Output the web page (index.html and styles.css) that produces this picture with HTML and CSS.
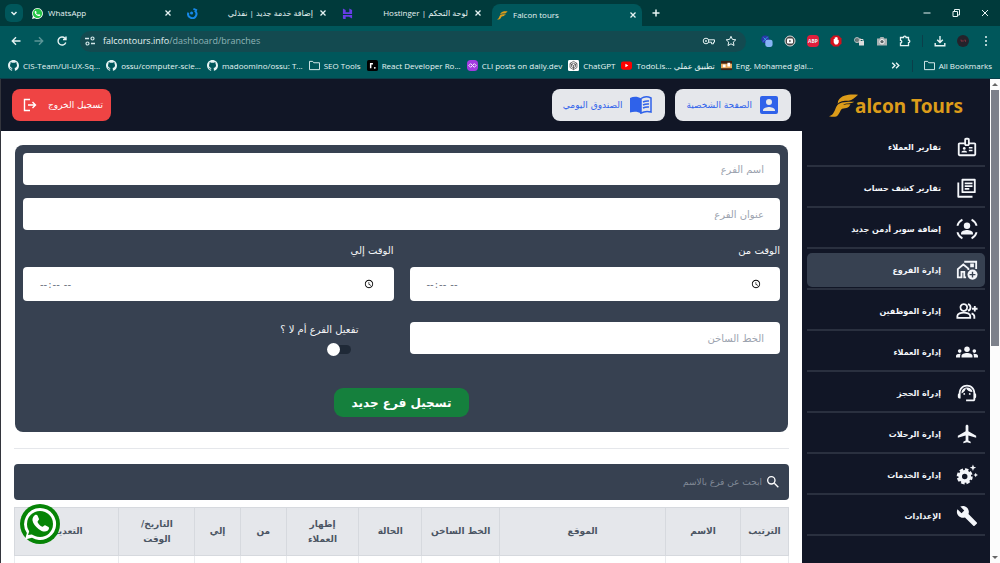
FILE: index.html
```html
<!DOCTYPE html>
<html lang="en">
<head>
<meta charset="utf-8">
<meta name="viewport" content="width=device-width, initial-scale=1">
<title>Falcon tours</title>
<link rel="stylesheet" href="styles.css">
</head>
<body>
<svg class="sprite" aria-hidden="true">
  <symbol id="close" viewBox="0 0 10 10"><path d="M2.500 2.500l5 5M7.500 2.500l-5 5" fill="none" stroke="currentColor" stroke-width="1.300"/></symbol>
  <symbol id="folder" viewBox="0 0 12 12"><path d="M.5 1.500h3.500l1.200 1.500h6.300v7.500H.5z" fill="none" stroke="currentColor" stroke-linejoin="round"/></symbol>
  <symbol id="github" viewBox="0 0 16 16"><path fill="currentColor" d="M8 0C3.58 0 0 3.58 0 8c0 3.54 2.29 6.53 5.47 7.59.4.07.55-.17.55-.38 0-.19-.01-.82-.01-1.49-2.01.37-2.53-.49-2.69-.94-.09-.23-.48-.94-.82-1.13-.28-.15-.68-.52-.01-.53.63-.01 1.08.58 1.23.82.72 1.21 1.87.87 2.33.66.07-.52.28-.87.51-1.07-1.78-.2-3.64-.89-3.64-3.95 0-.87.31-1.59.82-2.15-.08-.2-.36-1.02.08-2.12 0 0 .67-.21 2.2.82.64-.18 1.32-.27 2-.27s1.36.09 2 .27c1.53-1.04 2.2-.82 2.2-.82.44 1.1.16 1.92.08 2.12.51.56.82 1.27.82 2.15 0 3.07-1.87 3.75-3.65 3.95.29.25.54.73.54 1.48 0 1.07-.01 1.93-.01 2.2 0 .21.15.46.55.38A8.01 8.01 0 0 0 16 8c0-4.42-3.58-8-8-8"/></symbol>
  <symbol id="handset" viewBox="0 0 16 16"><path fill="currentColor" d="M11.609 9.587c-.197-.099-1.17-.578-1.353-.646-.182-.065-.315-.099-.445.099-.133.197-.513.646-.627.775-.114.133-.232.148-.43.05-.197-.1-.836-.308-1.592-.985-.59-.525-.985-1.175-1.103-1.372-.114-.198-.011-.304.088-.403.087-.088.197-.232.296-.346.1-.114.133-.198.198-.33.065-.134.034-.248-.015-.347-.05-.099-.445-1.076-.612-1.47-.16-.389-.323-.335-.445-.34-.114-.007-.247-.007-.38-.007a.73.73 0 0 0-.529.247c-.182.198-.691.677-.691 1.654s.71 1.916.81 2.049c.098.133 1.394 2.132 3.383 2.992.47.205.84.326 1.129.418.475.152.904.129 1.246.08.38-.058 1.171-.48 1.338-.943.164-.464.164-.86.114-.992-.049-.133-.182-.198-.38-.297"/></symbol>
  <symbol id="falcon" viewBox="0 0 32 26"><path fill="currentColor" d="M31 1C23 0 13 1 10 7c-1 2 0 2-1 4 3-3 6-3.500 12-3.500 4-1 6-3 10-6.500zM27 8.500C19 8.500 12 8.500 9 12c-2 2.500-2 5-4 8-1 2-2 3-5 4 5 1 8 1 10-2 2-2 2-5 4-6 2-1 4-.5 6-1.500 2-1 2-2.500 3-3.500-3 0-6 0-8 1 3-2.500 8-1 12-3.500z"/></symbol>
</svg>

<div class="browser">
  <div class="tabs">
    <button class="tab-menu" aria-label="Search tabs"><svg viewBox="0 0 10 10"><path d="M2.500 4L5 6.500 7.500 4" fill="none" stroke="currentColor" stroke-width="1.500"/></svg></button>
    <div class="tab">
      <svg class="fav" viewBox="0 0 16 16"><path d="M8 0a8 8 0 1 1-4 15L0 16l1.200-4A8 8 0 0 1 8 0z" fill="#fff"/><circle cx="8" cy="8" r="6.800" fill="#25c648"/><use href="#handset" color="#fff"/></svg>
      <span class="tab-title">WhatsApp</span>
      <button class="x" aria-label="Close tab"><svg><use href="#close"/></svg></button>
    </div>
    <div class="tab">
      <svg class="fav" viewBox="0 0 12 12"><path d="M1.500 5a4.500 4.500 0 1 0 7-2" fill="none" stroke="#1688e8" stroke-width="2.200"/><circle cx="5" cy="5.500" r="1.700" fill="#1688e8"/><path d="M7 1l4 1.500" stroke="#1688e8" stroke-width="2"/></svg>
      <span class="tab-title rtl" dir="rtl">إضافة خدمة جديد | نفذلي</span>
      <button class="x" aria-label="Close tab"><svg><use href="#close"/></svg></button>
    </div>
    <div class="tab">
      <svg class="fav" viewBox="0 0 12 12"><path d="M1 .5l3 1.800v2.200h4V.5l3 1.800v4.200H1zM1 11.500V7.500h10v4L8 9.800V9.500H4v3.800z" fill="#673de6"/></svg>
      <span class="tab-title rtl" dir="rtl">لوحة التحكم | Hostinger</span>
      <button class="x" aria-label="Close tab"><svg><use href="#close"/></svg></button>
    </div>
    <div class="tab active">
      <svg class="fav gold" viewBox="0 0 32 26"><use href="#falcon"/></svg>
      <span class="tab-title">Falcon tours</span>
      <button class="x" aria-label="Close tab"><svg><use href="#close"/></svg></button>
    </div>
    <button class="new-tab" aria-label="New tab"><svg viewBox="0 0 10 10"><path d="M5 1.500v7M1.500 5h7" stroke="currentColor" stroke-width="1.500"/></svg></button>
    <div class="window-controls">
      <button aria-label="Minimize"><svg viewBox="0 0 10 10"><path d="M1.500 5h7" stroke="currentColor"/></svg></button>
      <button aria-label="Restore"><svg viewBox="0 0 10 10"><path d="M2 3.500h4.500V8.500H2zM3.500 3.500V1.500h5V7h-2" fill="none" stroke="currentColor"/></svg></button>
      <button aria-label="Close window"><svg viewBox="0 0 10 10"><path d="M2 2l6 6M8 2L2 8" stroke="currentColor"/></svg></button>
    </div>
  </div>

  <div class="toolbar">
    <div class="nav-buttons">
      <button aria-label="Back"><svg viewBox="0 0 12 12"><path d="M10.500 6H2.500M6 2.300L2.300 6 6 9.700" fill="none" stroke="currentColor" stroke-width="1.400"/></svg></button>
      <button class="dim" aria-label="Forward"><svg viewBox="0 0 12 12"><path d="M1.500 6h8M6 2.300L9.700 6 6 9.700" fill="none" stroke="currentColor" stroke-width="1.400"/></svg></button>
      <button aria-label="Reload"><svg viewBox="0 0 12 12"><path d="M9.800 7.500A4 4 0 1 1 9 3.300L10 4.300M10 1.500v3H7" fill="none" stroke="currentColor" stroke-width="1.400"/></svg></button>
    </div>
    <div class="address">
      <svg class="site" viewBox="0 0 12 12"><path d="M1 3.500h4M7 8.500h4" stroke="#d5e8ea" stroke-width="1.300"/><circle cx="8.500" cy="3.500" r="1.500" fill="none" stroke="#d5e8ea" stroke-width="1.200"/><circle cx="3.500" cy="8.500" r="1.500" fill="none" stroke="#d5e8ea" stroke-width="1.200"/></svg>
      <span class="url">falcontours.info<span class="path">/dashboard/branches</span></span>
      <svg class="key" viewBox="0 0 14 12"><circle cx="4" cy="6" r="2.800" fill="none" stroke="currentColor"/><circle cx="4" cy="6" r=".9" fill="currentColor"/><path d="M6.500 4.800h6v2.400h-1v1.600H9.500V7.200h-3" fill="none" stroke="currentColor"/></svg>
      <svg class="star" viewBox="0 0 12 12"><path d="M6 1.300l1.400 3.100 3.400.4-2.500 2.300.7 3.400-3-1.700-3 1.700.7-3.400L1.200 4.800l3.400-.4z" fill="none" stroke="currentColor"/></svg>
    </div>
    <div class="extensions">
      <button aria-label="Translate extension"><svg viewBox="0 0 14 14"><circle cx="5" cy="5" r="4.500" fill="#2a35a8"/><path d="M2 8l6-6M3 3l4 4" stroke="#35b5e8"/><rect x="5" y="5.500" width="8.500" height="8.500" rx="2.500" fill="#86b4f5"/></svg></button>
      <button aria-label="Video extension"><svg viewBox="0 0 12 12"><circle cx="6" cy="6" r="5" fill="#464646" stroke="#ddd"/><rect x="3" y="3.500" width="6" height="5" rx="1.200" fill="#fff"/><path d="M5.300 4.800v2.400l2-1.200z" fill="#333"/></svg></button>
      <button class="abp" aria-label="Ad block extension">ABP</button>
      <button aria-label="Blocker extension"><svg viewBox="0 0 12 12"><path d="M3.500.5h5l3 3v5l-3 3h-5l-3-3v-5z" fill="#d4101c"/><path d="M3.700 5.500V4h1V2.500h1V2h1v.5h1V5l1-.3v2.800L7.300 9.500H5L3.700 7.500z" fill="#fff"/></svg></button>
      <button aria-label="Lock extension"><svg viewBox="0 0 12 12"><path d="M2 3h6v5H3z" fill="#6b7677"/><circle cx="4" cy="5" r="2.500" fill="none" stroke="#b3c0c1"/><rect x="6" y="6" width="5" height="4.500" fill="#ddd"/><path d="M7 6V4.500h3V6" fill="none" stroke="#ddd"/></svg></button>
      <button aria-label="Screenshot extension"><svg viewBox="0 0 12 12"><path d="M1 3.500h2.500l1-1.500h3l1 1.500H11v7H1z" fill="#aab2b3"/><circle cx="6" cy="6.700" r="2.200" fill="#5c6668" stroke="#fff"/></svg></button>
      <button aria-label="Extensions"><svg viewBox="0 0 12 12"><path d="M1.500 2.500h3a1.300 1.300 0 0 1 2.600 0h2.400V5a1.300 1.300 0 0 1 0 2.600v3h-8V8a1.300 1.300 0 0 0 0-2.600z" fill="none" stroke="currentColor" stroke-width="1.300"/></svg></button>
      <span class="divider"></span>
      <button aria-label="Downloads"><svg viewBox="0 0 12 12"><path d="M6 1v6.500M3.200 4.800L6 7.600l2.800-2.800M1.200 8v2.800h9.600V8" fill="none" stroke="currentColor" stroke-width="1.400"/></svg></button>
      <button aria-label="Profile"><svg class="avatar" viewBox="0 0 14 14"><circle cx="7" cy="7" r="7" fill="#24222b"/><path d="M4 6h1.500v2M7 6v2M8.500 6h1.500v2" stroke="#8b3640" fill="none"/></svg></button>
      <button aria-label="Menu"><svg viewBox="0 0 12 12" fill="currentColor"><circle cx="6" cy="2" r="1"/><circle cx="6" cy="6" r="1"/><circle cx="6" cy="10" r="1"/></svg></button>
    </div>
  </div>

  <nav class="bookmarks" aria-label="Bookmarks">
    <a href="#"><svg><use href="#github"/></svg>CIS-Team/UI-UX-Sq...</a>
    <a href="#"><svg><use href="#github"/></svg>ossu/computer-scie...</a>
    <a href="#"><svg><use href="#github"/></svg>madoomino/ossu: T...</a>
    <a href="#"><svg><use href="#folder"/></svg>SEO Tools</a>
    <a href="#"><svg viewBox="0 0 12 12"><rect width="12" height="12" rx="2" fill="#000"/><path d="M4 9V4h2.500" fill="none" stroke="#fff" stroke-width="1.600"/><circle cx="8.500" cy="8.500" r="1" fill="#fff"/></svg>React Developer Ro...</a>
    <a href="#"><svg viewBox="0 0 12 12"><rect width="12" height="12" rx="4" fill="#a33be0"/><path d="M2 6l2-2 2 2-2 2zM6 6l2-2 2 2-2 2z" fill="none" stroke="#fff"/></svg>CLI posts on daily.dev</a>
    <a href="#"><svg viewBox="0 0 12 12"><rect width="12" height="12" rx="1.500" fill="#fff"/><path d="M6 1.500L9.800 3.700v4.500L6 10.500 2.200 8.200V3.700zM6 3.500l2.200 1.200v2.600L6 8.500 3.800 7.300V4.700zM2.200 3.700L6 6l3.800-2.300M6 6v4.500" fill="none" stroke="#444" stroke-width=".8"/></svg>ChatGPT</a>
    <a href="#"><svg viewBox="0 0 12 12"><rect y="1.500" width="12" height="9" rx="2.300" fill="#f00"/><path d="M4.800 4v4L8 6z" fill="#fff"/></svg><span>TodoLis... تطبيق عملي</span></a>
    <a href="#"><svg viewBox="0 0 12 12"><rect y="1" width="12" height="10" fill="#3b2013"/><rect y="4" width="12" height="5" fill="#e8a659"/><path d="M2 5h3v3H2zM7 3h3v4H7z" fill="#fff"/></svg>Eng. Mohamed glal...</a>
    <button class="more" aria-label="More bookmarks"><svg viewBox="0 0 10 10"><path d="M2 2.500L4.500 5 2 7.500M5.500 2.500L8 5 5.500 7.500" fill="none" stroke="currentColor" stroke-width="1.300"/></svg></button>
    <span class="divider"></span>
    <a href="#"><svg><use href="#folder"/></svg>All Bookmarks</a>
  </nav>
</div>

<div class="page" dir="rtl" lang="ar">
  <div class="scrollbar" aria-hidden="true"><span class="arrow up"></span><span class="thumb"></span><span class="arrow down"></span></div>

  <aside class="sidebar">
    <a class="logo" href="#" dir="ltr"><svg viewBox="0 0 32 26"><use href="#falcon"/></svg><span>alcon Tours</span></a>
    <ul class="menu">
      <li><a href="#"><svg viewBox="0 0 24 24"><path d="M20 7h-5V4c0-1.100-.9-2-2-2h-2c-1.100 0-2 .9-2 2v3H4c-1.100 0-2 .9-2 2v11c0 1.100.9 2 2 2h16c1.100 0 2-.9 2-2V9c0-1.100-.9-2-2-2zm-9-3h2v5h-2V4zm9 16H4V9h5c0 1.100.9 2 2 2h2c1.100 0 2-.9 2-2h5v11z"/><circle cx="9" cy="13.500" r="1.500"/><path d="M6 18v-.5c0-1 1.500-1.800 3-1.800s3 .8 3 1.800v.5zM14 12h4v1.500h-4zM14 15h4v1.500h-4z"/></svg>تقارير العملاء</a></li>
      <li><a href="#"><svg viewBox="0 0 24 24"><path d="M8 3h12.500v13.500H7V3z M2.500 6v15.500H18" fill="none" stroke="currentColor" stroke-width="2" stroke-linejoin="round"/><path d="M9.500 6h8.500v2H9.500zM9.500 9h8.500v1.800H9.500zM9.500 12h5v1.800h-5z"/></svg>تقارير كشف حساب</a></li>
      <li><a href="#"><svg viewBox="0 0 24 24"><circle cx="12" cy="8.500" r="3.500"/><path d="M5.500 18v-1.500c0-2.200 4-3.500 6.500-3.500s6.500 1.300 6.500 3.500V18z"/><path d="M1.500 8.500A11 11 0 0 1 7 1.800M17 1.800a11 11 0 0 1 5.500 6.700M22.500 15.500a11 11 0 0 1-5.500 6.700M7 22.200a11 11 0 0 1-5.500-6.700" fill="none" stroke="currentColor" stroke-width="2"/></svg>إضافة سوبر أدمن جديد</a></li>
      <li><a class="current" href="#" aria-current="page"><svg viewBox="0 0 24 24"><path d="M11 20H9v-6H6v6H2v-9l6-5 5.500 4.500V12M9 3h13v8M16.500 6h2v2h-2z" fill="none" stroke="currentColor" stroke-width="2"/><circle cx="18" cy="17" r="5.500"/><path d="M18 13.800v6.400M14.800 17h6.400" stroke="#374151" stroke-width="1.500"/></svg>إدارة الفروع</a></li>
      <li><a href="#"><svg viewBox="0 0 24 24"><path d="M8.500 4.500a3.700 3.700 0 1 0 .01 0zM1.500 19.500v-2c0-2.500 4-3.800 7-3.800s7 1.300 7 3.800v2zM13 4.500a3.700 3.700 0 0 1 0 7.200M17 14.500c2 .8 3 2 3 3.500v2.500M17.500 9.500h6M20.500 6.500v6" fill="none" stroke="currentColor" stroke-width="2"/></svg>إدارة الموظفين</a></li>
      <li><a href="#"><svg viewBox="0 0 24 24"><circle cx="12" cy="9" r="3"/><circle cx="4" cy="11" r="2"/><circle cx="20" cy="11" r="2"/><path d="M6 18v-1.600c0-2 3-3.200 6-3.200s6 1.200 6 3.200V18zM0 18v-1.600c0-1.600 2.300-2.600 5.200-2.400C4.500 15 4.500 16 4.500 18zM24 18v-1.600c0-1.600-2.300-2.600-5.200-2.400.7 1 .7 2 .7 4z"/></svg>إدارة العملاء</a></li>
      <li><a href="#"><svg viewBox="0 0 24 24"><path d="M21 12.220C21 6.730 16.740 3 12 3c-4.690 0-9 3.650-9 9.280-.6.340-1 .98-1 1.720v2c0 1.100.9 2 2 2h1v-6.100c0-3.870 3.130-7 7-7s7 3.130 7 7V19h-8v2h8c1.100 0 2-.9 2-2v-1.220c.59-.31 1-.92 1-1.640v-2.300c0-.7-.41-1.310-1-1.620z"/><circle cx="9" cy="13" r="1"/><circle cx="15" cy="13" r="1"/><path d="M18 11.030A6.040 6.040 0 0 0 12.050 6c-3.030 0-6.290 2.510-6.030 6.450a8.075 8.075 0 0 0 4.860-5.890c1.310 2.630 4 4.440 7.120 4.470z"/></svg>إدراة الحجز</a></li>
      <li><a href="#"><svg viewBox="0 0 24 24"><path d="M22 16v-2l-8.500-5V3.500c0-.83-.67-1.500-1.500-1.500s-1.500.67-1.500 1.500V9L2 14v2l8.500-2.500V19L8 20.500V22l4-1 4 1v-1.500L13.500 19v-5.500L22 16z"/></svg>إدارة الرحلات</a></li>
      <li><a href="#"><svg viewBox="0 0 24 24"><circle cx="9.500" cy="13.500" r="5" fill="none" stroke="currentColor" stroke-width="4"/><circle cx="9.500" cy="13.500" r="7.500" fill="none" stroke="currentColor" stroke-width="2.500" stroke-dasharray="3.900 1.990"/><path d="M18.500.5l1 2.500L22 4l-2.500 1-1 2.500-1-2.500L15 4l2.500-1zM21.500 9.500l.8 1.700 1.700.8-1.700.8-.8 1.700-.8-1.700L19 12l1.700-.8z"/></svg>إدارة الخدمات</a></li>
      <li><a href="#"><svg viewBox="0 0 24 24"><path d="M22.700 19l-9.100-9.100c.9-2.300.4-5-1.500-6.900-2-2-5-2.400-7.400-1.300L9 6 6 9 1.600 4.700C.4 7.100.9 10.100 2.900 12.100c1.900 1.900 4.600 2.400 6.900 1.500l9.100 9.100c.4.4 1 .4 1.400 0l2.300-2.300c.5-.4.5-1.100.1-1.400z"/></svg>الإعدادات</a></li>
    </ul>
  </aside>

  <div class="main">
    <header class="topbar">
      <a class="chip" href="#"><svg viewBox="0 0 18 18"><path d="M0 2v14a2 2 0 0 0 2 2h14a2 2 0 0 0 2-2V2a2 2 0 0 0-2-2H2a2 2 0 0 0-2 2zm12 4a3 3 0 1 1-6 0 3 3 0 0 1 6 0zM3 14c0-2 4-3.100 6-3.100s6 1.100 6 3.100v1H3z"/></svg>الصفحة الشخصية</a>
      <a class="chip" href="#"><svg class="book" viewBox="0 0 22 18"><path d="M0 2c4-2 8-1.500 11 .5v15c-3-2-7-2-11-1z"/><path d="M11 2.500C14 .5 18 .5 21 2v14c-4-1-7-.7-10 1.200zM13 6c2-1 4-1.300 6-1M13 9c2-1 4-1.300 6-1M13 12c2-1 4-1.300 6-1" fill="none" stroke="currentColor" stroke-width="1.500"/></svg>الصندوق اليومي</a>
      <button class="logout">تسجيل الخروج<svg viewBox="0 0 14 14"><path d="M7 1.500H1.500v11H7M5 7h7.500M9.500 4l3 3-3 3" fill="none" stroke="currentColor" stroke-width="1.400"/></svg></button>
    </header>

    <main class="content">
      <form class="card">
        <input class="field wide" type="text" placeholder="اسم الفرع" aria-label="اسم الفرع">
        <input class="field wide" type="text" placeholder="عنوان الفرع" aria-label="عنوان الفرع">
        <div class="group"><label for="from">الوقت من</label><input class="field time" id="from" type="time" dir="ltr"></div>
        <div class="group"><label for="to">الوقت إلي</label><input class="field time" id="to" type="time" dir="ltr"></div>
        <input class="field hotline" type="tel" dir="rtl" placeholder="الخط الساخن" aria-label="الخط الساخن">
        <div class="toggle"><label for="active">تفعيل الفرع أم لا ؟</label><input id="active" type="checkbox" role="switch"></div>
        <button class="submit" type="button">تسجيل فرع جديد</button>
      </form>
      <hr>
      <div class="search">
        <svg viewBox="0 0 24 24"><circle cx="9.500" cy="9.500" r="5.500"/><path d="M14 14l6 6"/></svg>
        <input type="search" placeholder="ابحث عن فرع بالاسم" aria-label="ابحث عن فرع بالاسم">
      </div>
      <table>
        <colgroup><col class="c-order"><col class="c-name"><col><col class="c-phone"><col class="c-state"><col class="c-show"><col class="c-time"><col class="c-time"><col class="c-date"><col class="c-edit"></colgroup>
        <thead><tr><th>الترتيب</th><th>الاسم</th><th>الموقع</th><th>الخط الساخن</th><th>الحالة</th><th>إظهار العملاء</th><th>من</th><th>إلي</th><th>التاريخ/ الوقت</th><th>التعديل</th></tr></thead>
        <tbody><tr><td></td><td></td><td></td><td></td><td></td><td></td><td></td><td></td><td></td><td></td></tr></tbody>
      </table>
    </main>
    <a class="whatsapp" href="#" aria-label="WhatsApp"><svg viewBox="0 0 40 40"><circle cx="20" cy="20" r="20" fill="#068406"/><path d="M20 4a16 16 0 1 1-8 29.800L5 35.500l1.900-6.600A16 16 0 0 1 20 4z" fill="#fff"/><circle cx="20" cy="20" r="13" fill="#068406"/><path d="M8 31l2-6 5 5z" fill="#068406"/><path d="M14 12c1-1.500 3-1.500 3.500-.5l1.500 3.500c.3 1-1.800 2.300-1.500 3 1 2.200 2.500 3.700 4.800 4.800.8.300 1.900-1.900 2.900-1.500l3.300 1.700c1 .5.500 2.700-1 3.800-2.500 1.700-6 .5-9-1.800-3-2.500-5.500-5.500-6-8.500-.2-2 .5-3.500 1.500-4.500z" fill="#fff"/></svg></a>
  </div>
</div>
</body>
</html>
```
FILE: styles.css
```css
* { box-sizing: border-box; }

body {
  margin: 0;
  height: 100vh;
  display: flex;
  flex-direction: column;
  overflow: hidden;
  background: #fff;
  font-family: "DejaVu Sans", sans-serif;
}

button { border: 0; padding: 0; background: none; color: inherit; font: inherit; }
a { color: inherit; text-decoration: none; }
svg { display: block; flex: none; }
.sprite { position: absolute; width: 0; height: 0; }

/* Browser window */
.browser {
  flex: none;
  background: #00575b;
  color: #e6f4f4;
  font: 8px/12px "Open Sans", "DejaVu Sans", sans-serif;
  border-bottom: 1px solid #0b3f4a;
}
.tabs {
  display: flex;
  align-items: center;
  height: 26px;
  padding-left: 5px;
  background: #003a3b;
}
.tab-menu {
  display: grid;
  place-items: center;
  width: 18px;
  height: 18px;
  margin-right: 4px;
  border-radius: 6px;
  background: #00575b;
}
.tab-menu svg, .x svg { width: 10px; height: 10px; }
.tab {
  display: flex;
  align-items: center;
  gap: 5px;
  width: 155px;
  height: 22px;
  padding: 0 9px 0 5px;
}
.fav { width: 11px; height: 11px; }
.gold { color: #dc9c1a; }
.tab-title { flex: 1; white-space: nowrap; }
.tab-title.rtl { text-align: right; }
.tab.active {
  align-self: flex-end;
  width: 150px;
  padding-right: 4px;
  border-radius: 8px 8px 0 0;
  background: #00575b;
}
.new-tab { margin-left: 9px; }
.new-tab svg { width: 10px; height: 10px; }
.window-controls { display: flex; gap: 19px; margin-left: auto; padding-right: 10px; }
.window-controls svg { width: 10px; height: 10px; }

.toolbar { display: flex; align-items: center; height: 30px; padding: 0 8px 0 10px; }
.nav-buttons { display: flex; gap: 11px; margin-right: 12px; }
.nav-buttons svg, .extensions svg { width: 12px; height: 12px; }
.dim { opacity: .4; }
.address {
  flex: 1;
  display: flex;
  align-items: center;
  gap: 9px;
  height: 21px;
  padding: 0 9px 0 4px;
  border-radius: 11px;
  background: #134a50;
}
.site { width: 12px; height: 12px; }
.url { flex: 1; margin-left: -2px; font-size: 9px; }
.path { color: #8fb4b7; }
.key { width: 14px; height: 12px; }
.star { width: 12px; height: 12px; }
.extensions { display: flex; align-items: center; gap: 11px; padding-left: 15px; }
.extensions .abp {
  width: 12px;
  height: 12px;
  border-radius: 4px;
  background: #e01e3c;
  font: bold 5px/12px "Open Sans", sans-serif;
  text-align: center;
}
.divider { width: 1px; height: 12px; background: #0b3f4a; }

.bookmarks {
  display: flex;
  align-items: center;
  gap: 6px;
  height: 22px;
  padding: 0 8px 3px;
  white-space: nowrap;
}
.bookmarks a { display: flex; align-items: center; gap: 4px; }
.bookmarks svg { width: 11px; height: 11px; }
.bookmarks .divider { margin: 0 5px; }
.more { margin-left: auto; }

/* Dashboard */
.page { flex: 1; display: flex; min-height: 0; border-left: 1px solid #33353d; }
.scrollbar {
  display: flex;
  flex-direction: column;
  justify-content: space-between;
  align-items: center;
  width: 10px;
  background: #fcfcfc;
}
.thumb { width: 8px; height: 256px; margin-bottom: auto; background: #7d818b; }
.arrow { width: 10px; height: 11px; display: grid; place-items: center; }
.arrow::before { content: ""; border: 3px solid transparent; }
.up::before { border-top-width: 0; border-bottom-color: #666; }
.down::before { border-bottom-width: 0; border-top-color: #666; }

.sidebar { width: 188px; padding: 0 5px; background: #111626; color: #f4f6fa; }
.logo {
  display: flex;
  align-items: center;
  justify-content: center;
  height: 51px;
  padding-top: 3px;
  color: #dc9c1a;
  font: bold 19px/24px "Noto Sans", sans-serif;
}
.logo svg { width: 30px; height: 26px; margin-right: -4px; }
.menu { margin: 0; padding: 0; list-style: none; }
.menu li { padding-bottom: 1px; margin-bottom: 4px; border-bottom: 2px solid #2a303f; }
.menu a {
  display: flex;
  align-items: center;
  gap: 15px;
  height: 34px;
  padding: 0 7px;
  border-radius: 5px;
  font-size: 8px;
  font-weight: bold;
}
.menu svg { width: 22px; height: 22px; fill: currentColor; }
.menu .current { background: #374151; }

.main { flex: 1; min-width: 0; position: relative; }
.topbar { display: flex; gap: 10px; padding: 10px 11px; background: #111626; }
.chip, .logout {
  display: flex;
  align-items: center;
  gap: 8px;
  height: 32px;
  padding: 0 11px;
  border-radius: 8px;
  font-size: 9px;
  white-space: nowrap;
}
.chip { padding-right: 13px; background: #e5e7eb; color: #2f62ea; }
.chip svg { width: 18px; height: 18px; fill: currentColor; }
.chip .book { width: 22px; }
.logout { gap: 11px; margin-right: auto; padding-right: 8px; background: #ef4444; color: #fff; }
.logout svg { width: 14px; height: 14px; }

.content { padding: 14px 13px; }
.card {
  display: grid;
  grid-template-columns: 1fr 1fr;
  gap: 13px 16px;
  margin: 0 1px;
  padding: 8px 8px 15px;
  border-radius: 8px;
  background: #374151;
  color: #f3f4f6;
  font-size: 10px;
}
.field {
  width: 100%;
  height: 32px;
  padding: 0 16px;
  border: 0;
  border-radius: 4px;
  background: #fff;
  color: #6b7280;
  font: 10px "DejaVu Sans", sans-serif;
}
.field::placeholder { color: #9ca3af; opacity: 1; }
.wide { grid-column: 1 / -1; }
.group { display: grid; gap: 8px; }
.group label { line-height: 16px; }
.time { height: 34px; }
.hotline { margin-top: 8px; }
.toggle {
  justify-self: start;
  display: grid;
  justify-items: start;
  align-content: start;
  gap: 6px;
  margin: 8px 35px 0;
}
.toggle label { line-height: 15px; }
.toggle input {
  appearance: none;
  display: flex;
  align-items: center;
  justify-content: flex-end;
  width: 24px;
  height: 9px;
  margin: 2px 8px;
  border-radius: 5px;
  background: #1f2937;
}
.toggle input::before { content: ""; flex: none; width: 13px; height: 13px; border-radius: 50%; background: #fff; }
.submit {
  grid-column: 1 / -1;
  justify-self: center;
  height: 29px;
  margin-top: 19px;
  padding: 0 18px;
  border-radius: 9px;
  background: #15803d;
  color: #fff;
  font-size: 12px;
  font-weight: bold;
}
hr { height: 1px; margin: 16px 0 15px; border: 0; background: #e5e7eb; }
.search {
  display: flex;
  align-items: center;
  gap: 3px;
  height: 36px;
  padding: 0 8px;
  border-radius: 4px;
  background: #374151;
}
.search svg { width: 16px; height: 16px; fill: none; stroke: #fff; stroke-width: 2; }
.search input {
  flex: 1;
  border: 0;
  padding: 0;
  background: none;
  color: #fff;
  font: 9px "DejaVu Sans", sans-serif;
}
.search input::placeholder { color: #808997; opacity: 1; }

table { width: 100%; margin-top: 7px; border-collapse: collapse; table-layout: fixed; }
th, td { border: 1px solid #d6d9de; padding: 0 8px; }
th {
  height: 48px;
  background: #e5e7eb;
  color: #4b5563;
  font-size: 9px;
  line-height: 15px;
  font-weight: bold;
}
th:first-child, th:nth-child(4) { padding: 0 2px; }
td { height: 48px; border-color: #e9ebee; }
.c-order { width: 6.2%; }
.c-name { width: 9.7%; }
.c-phone { width: 10.1%; }
.c-state { width: 8.1%; }
.c-show { width: 9.4%; }
.c-time { width: 5.9%; }
.c-date { width: 9.8%; }
.c-edit { width: 13.5%; }

/* Floating chat shortcut */
.whatsapp { position: absolute; left: 19px; bottom: 19px; }
.whatsapp svg { width: 40px; height: 40px; }
```
